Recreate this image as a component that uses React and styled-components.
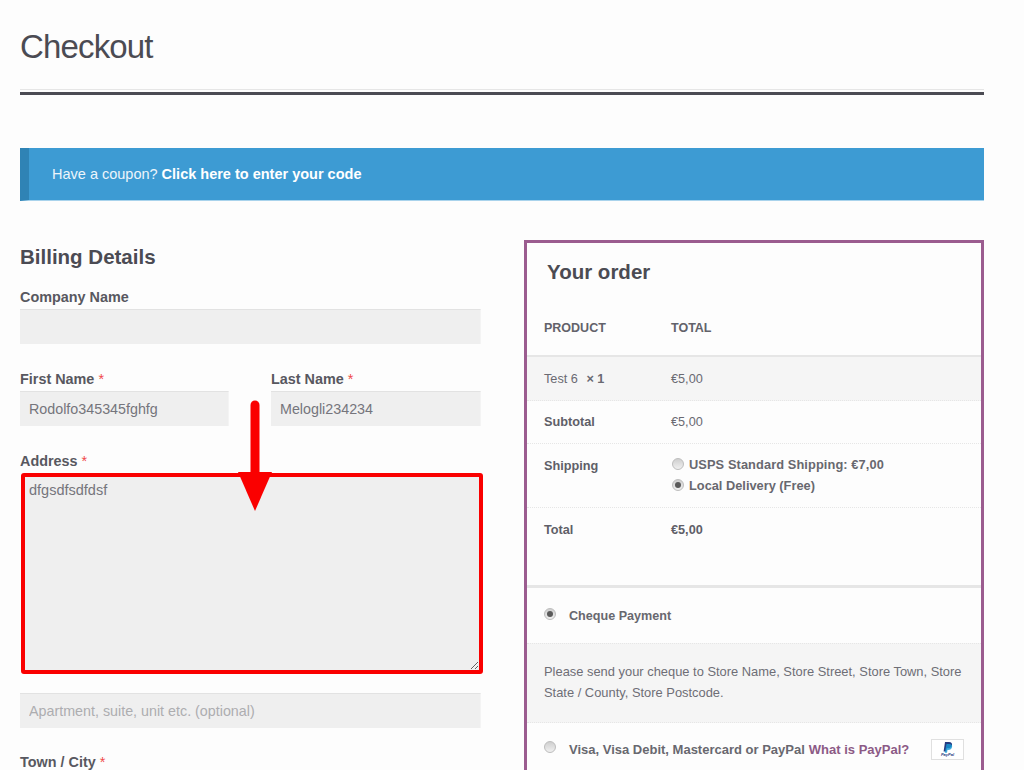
import React from "react";
import styled, { createGlobalStyle } from "styled-components";

const GlobalStyle = createGlobalStyle`
  html, body {
    margin: 0;
    height: 770px;
    overflow: hidden;
    background: #fdfdfd;
  }
  * {
    box-sizing: border-box;
  }
  body {
    font-family: "Liberation Sans", Arial, sans-serif;
    color: #5f5f68;
  }
`;

const Page = styled.div`
  position: relative;
  width: 1024px;
  height: 770px;
  padding: 0 40px 0 20px;
  overflow: hidden;
`;

const TitleBar = styled.header`
  height: 95px;
  padding-top: 28px;
  border-bottom: 3px solid #4b4b53;
  box-shadow: inset 0 -2px 0 #fdfdfd, inset 0 -3px 0 #e6e6e6;
`;

const Title = styled.h1`
  margin: 0;
  font-size: 33px;
  line-height: 38px;
  font-weight: 400;
  letter-spacing: -0.85px;
  color: #4b4b53;
`;

const Notice = styled.div`
  display: flex;
  align-items: center;
  height: 53px;
  margin-top: 53px;
  padding-left: 23px;
  background: #3d9bd3;
  border-left: 9px solid #2f83b5;
  border-bottom: 1px solid #a9d3ec;
  font-size: 14.5px;
  color: #ecf5fb;

  b {
    margin-left: 4px;
    color: #fff;
  }
`;

const Columns = styled.div`
  display: grid;
  grid-template-columns: 461px 460px;
  column-gap: 43px;
  margin-top: 39px;
`;

const Billing = styled.section`
  padding-top: 4px;
`;

const BillingTitle = styled.h3`
  margin: 0 0 18px;
  font-size: 20.5px;
  line-height: 26px;
  color: #4b4b53;
`;

const Field = styled.div`
  margin-bottom: ${(p) => p.$gap || 26}px;
`;

const Label = styled.label`
  display: block;
  height: 18px;
  margin-bottom: 3px;
  font-size: 14.4px;
  line-height: 18px;
  font-weight: 700;
  color: #585860;

  i {
    font-style: normal;
    font-weight: 400;
    color: #f04a4a;
  }
`;

const Pair = styled.div`
  display: grid;
  grid-template-columns: 209px 210px;
  column-gap: 42px;
`;

const Input = styled.input`
  display: block;
  width: 100%;
  height: 35px;
  padding: 0 9px;
  border: 0;
  border-top: 1px solid #e2e2e2;
  border-right: 1px solid #f4f4f4;
  background: #efefef;
  font: 14.3px "Liberation Sans", Arial, sans-serif;
  color: #75757c;
  outline: none;

  &::placeholder {
    color: #adadb0;
    opacity: 1;
  }
`;

const AddressBox = styled.textarea`
  display: block;
  width: 462px;
  height: 201px;
  margin: 2px 0 19px 1px;
  padding: 3px 4px;
  border: 4px solid #fa0000;
  border-radius: 3px;
  background: #efefef;
  font: 14.5px/20px "Liberation Sans", Arial, sans-serif;
  color: #75757c;
  outline: none;
  resize: vertical;
`;

const Order = styled.aside`
  height: 560px;
  border: 3px solid #9b5c8f;
  border-bottom: 0;
`;

const OrderTitle = styled.h3`
  margin: 0;
  height: 58px;
  padding: 16px 0 0 20px;
  font-size: 20.5px;
  line-height: 26px;
  color: #4b4b53;
`;

const Row = styled.div`
  display: grid;
  grid-template-columns: 127px 1fr;
  padding: ${(p) => p.$pad || "13px 17px 0"};
  height: ${(p) => p.$height}px;
  background: ${(p) => (p.$shade ? "#f5f5f5" : "transparent")};
  border-bottom: ${(p) => p.$line || "1px dotted #e6e6e6"};
  font-size: 12.7px;
  line-height: 18px;
  color: #6a6a72;
`;

const HeadCell = styled.span`
  font-size: 12.5px;
  font-weight: 700;
  color: #62626a;
`;

const RowLabel = styled.span`
  font-weight: 700;
  color: #5f5f68;
`;

const Qty = styled.b`
  margin-left: 5px;
`;

const ShippingList = styled.div`
  display: flex;
  flex-direction: column;
  gap: 3px;
  margin-top: -1px;
`;

const Option = styled.div`
  display: flex;
  align-items: center;
  gap: 5px;
  height: 18px;
  font-size: 12.8px;
  font-weight: 700;
  letter-spacing: ${(p) => p.$spread || 0}px;
  color: #68686f;
`;

const Radio = styled.span`
  flex: none;
  display: flex;
  align-items: center;
  justify-content: center;
  width: 12px;
  height: 12px;
  margin-top: -2px;
  margin-left: ${(p) => p.$nudge || 0}px;
  border-radius: 50%;
  border: 1px solid #bdbdbd;
  background: linear-gradient(#cfcfcf, #f0f0f0);

  &::after {
    content: "";
    display: ${(p) => (p.$on ? "block" : "none")};
    width: 6px;
    height: 6px;
    border-radius: 50%;
    background: #5a5a5a;
  }
`;

const Method = styled.div`
  display: flex;
  align-items: center;
  gap: 13px;
  height: ${(p) => p.$height}px;
  padding: 0 17px;
  font-size: ${(p) => p.$size}px;
  font-weight: 700;
  color: #68686f;

  ${Radio} {
    margin-top: -4px;
  }

  a {
    margin-left: 4px;
    color: #8c5a86;
    text-decoration: none;
  }
`;

const MethodText = styled.span`
  padding-top: 1px;
`;

const MethodNote = styled.div`
  height: 80px;
  padding: 18px 17px 0;
  background: #f5f5f5;
  border-top: 1px dotted #e6e6e6;
  border-bottom: 1px dotted #e6e6e6;
  font-size: 12.9px;
  line-height: 20.5px;
  color: #6e6e76;
`;

const Badge = styled.span`
  display: flex;
  flex-direction: column;
  align-items: center;
  width: 33px;
  height: 21px;
  margin-left: auto;
  padding-top: 2px;
  background: #fff;
  border: 1px solid #e0e0e0;

  svg {
    display: block;
  }

  small {
    font-size: 4px;
    line-height: 4px;
    font-style: italic;
    font-weight: 700;
    color: #253b80;
  }
`;

const Arrow = styled.svg`
  position: absolute;
  left: 234px;
  top: 398px;
`;

export default function App() {
  return (
    <>
      <GlobalStyle />
      <Page>
        <TitleBar>
          <Title>Checkout</Title>
        </TitleBar>
        <Notice>
          Have a coupon? <b>Click here to enter your code</b>
        </Notice>
        <Columns>
          <Billing>
            <BillingTitle>Billing Details</BillingTitle>
            <Field>
              <Label>Company Name</Label>
              <Input />
            </Field>
            <Pair>
              <Field>
                <Label>
                  First Name <i>*</i>
                </Label>
                <Input defaultValue="Rodolfo345345fghfg" />
              </Field>
              <Field>
                <Label>
                  Last Name <i>*</i>
                </Label>
                <Input defaultValue="Melogli234234" />
              </Field>
            </Pair>
            <Label>
              Address <i>*</i>
            </Label>
            <AddressBox defaultValue="dfgsdfsdfdsf" />
            <Field $gap={25}>
              <Input placeholder="Apartment, suite, unit etc. (optional)" />
            </Field>
            <Label>
              Town / City <i>*</i>
            </Label>
          </Billing>
          <Order>
            <OrderTitle>Your order</OrderTitle>
            <Row $height={56} $pad="18px 17px 0" $line="2px solid #e6e6e6">
              <HeadCell>PRODUCT</HeadCell>
              <HeadCell>TOTAL</HeadCell>
            </Row>
            <Row $height={44} $shade>
              <span>
                Test 6 <Qty>× 1</Qty>
              </span>
              <span>€5,00</span>
            </Row>
            <Row $height={43} $pad="12px 17px 0">
              <RowLabel>Subtotal</RowLabel>
              <span>€5,00</span>
            </Row>
            <Row $height={64}>
              <RowLabel>Shipping</RowLabel>
              <ShippingList>
                <Option $spread={0.1}>
                  <Radio $nudge={1} />
                  USPS Standard Shipping: €7,00
                </Option>
                <Option>
                  <Radio $nudge={1} $on />
                  Local Delivery (Free)
                </Option>
              </ShippingList>
            </Row>
            <Row $height={80} $line="3px solid #e6e6e6">
              <RowLabel>Total</RowLabel>
              <RowLabel>€5,00</RowLabel>
            </Row>
            <Method $height={55} $size={12.6}>
              <Radio $on />
              Cheque Payment
            </Method>
            <MethodNote>
              Please send your cheque to Store Name, Store Street, Store Town,
              Store State / County, Store Postcode.
            </MethodNote>
            <Method $height={52} $size={13}>
              <Radio />
              <MethodText>
                Visa, Visa Debit, Mastercard or PayPal
                <a href="#paypal">What is PayPal?</a>
              </MethodText>
              <Badge>
                <svg width="10" height="11" viewBox="0 0 10 11">
                  <path d="M2 0h4c2.4 0 3.4 1.3 3 3.2C8.600 5.300 7 6.300 5 6.300H3.800L3.200 9.500H.6z" fill="#253b80" />
                  <path d="M3.500 2h3c1.800 0 3 1 2.600 3C8.700 7 7.200 8 5.300 8H4.500L4 10.800H1.800z" fill="#179bd7" opacity="0.8" />
                </svg>
                <small>PayPal</small>
              </Badge>
            </Method>
          </Order>
        </Columns>
        <Arrow width="42" height="116" viewBox="0 0 42 116">
          <path d="M21 7V78" stroke="#fa0000" strokeWidth="9" strokeLinecap="round" fill="none" />
          <path d="M4 74H38L21 113z" fill="#fa0000" />
        </Arrow>
      </Page>
    </>
  );
}
